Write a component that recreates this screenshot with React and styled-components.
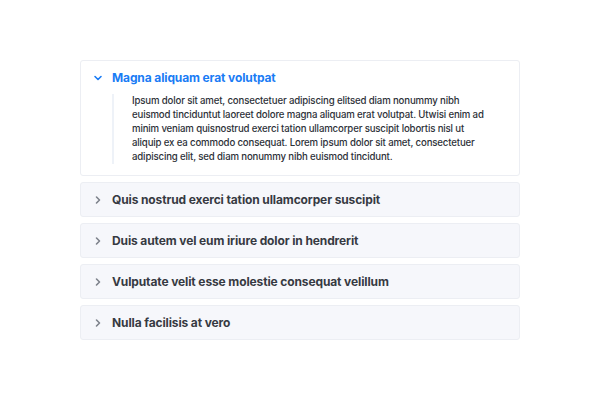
import React, { useState } from "react";
import styled, { createGlobalStyle } from "styled-components";

const Global = createGlobalStyle`
  html, body { margin: 0; padding: 0; background: #ffffff; }
  body { font-family: Inter, "Noto Sans", sans-serif; }
`;

const Page = styled.div`
  width: 600px;
  height: 400px;
  box-sizing: border-box;
  padding: 60px 80px 0 80px;
`;

const List = styled.div`
  display: flex;
  flex-direction: column;
  gap: 6px;
`;

const Item = styled.div`
  border: 1px solid #eceef3;
  border-radius: 3px;
  background: ${(p) => (p.$open ? "#ffffff" : "#f6f7fb")};
  box-sizing: border-box;
`;

const Header = styled.button`
  display: flex;
  align-items: center;
  gap: 8px;
  width: 100%;
  height: 33px;
  padding: 0 0 0 11px;
  border: 0;
  background: transparent;
  cursor: pointer;
  font-family: Inter, "Noto Sans", sans-serif;
  font-size: 12px;
  font-weight: 650;
  letter-spacing: -0.12px;
  color: ${(p) => (p.$open ? "#1a7cf5" : "#363a42")};
  text-align: left;
`;

const Chevron = styled.svg`
  width: 12px;
  height: 12px;
  flex: none;
  color: ${(p) => (p.$open ? "#1a7cf5" : "#7d828b")};
`;

const Body = styled.div`
  margin: 0 24px 11px 31px;
  padding: 0 0 0 18px;
  border-left: 2px solid #eef2f8;
  font-size: 9.65px;
  font-weight: 500;
  letter-spacing: -0.15px;
  line-height: 14px;
  color: #2d3138;
`;

const items = [
  {
    title: "Magna aliquam erat volutpat",
    body:
      "Ipsum dolor sit amet, consectetuer adipiscing elitsed diam nonummy nibh euismod tinciduntut laoreet dolore magna aliquam erat volutpat. Utwisi enim ad minim veniam quisnostrud exerci tation ullamcorper suscipit lobortis nisl ut aliquip ex ea commodo consequat. Lorem ipsum dolor sit amet, consectetuer adipiscing elit, sed diam nonummy nibh euismod tincidunt.",
  },
  { title: "Quis nostrud exerci tation ullamcorper suscipit", body: "" },
  { title: "Duis autem vel eum iriure dolor in hendrerit", body: "" },
  { title: "Vulputate velit esse molestie consequat velillum", body: "" },
  { title: "Nulla facilisis at vero", body: "" },
];

export default function App() {
  const [open, setOpen] = useState(0);
  return (
    <Page>
      <Global />
      <List>
        {items.map((it, i) => {
          const isOpen = open === i;
          return (
            <Item key={i} $open={isOpen}>
              <Header $open={isOpen} onClick={() => setOpen(isOpen ? -1 : i)}>
                <Chevron $open={isOpen} viewBox="0 0 24 24" fill="none" stroke="currentColor" strokeWidth="3.2" strokeLinecap="round" strokeLinejoin="round">
                  {isOpen ? <path d="M6 9l6 6 6-6" /> : <path d="M9 6l6 6-6 6" />}
                </Chevron>
                {it.title}
              </Header>
              {isOpen && <Body>{it.body}</Body>}
            </Item>
          );
        })}
      </List>
    </Page>
  );
}
